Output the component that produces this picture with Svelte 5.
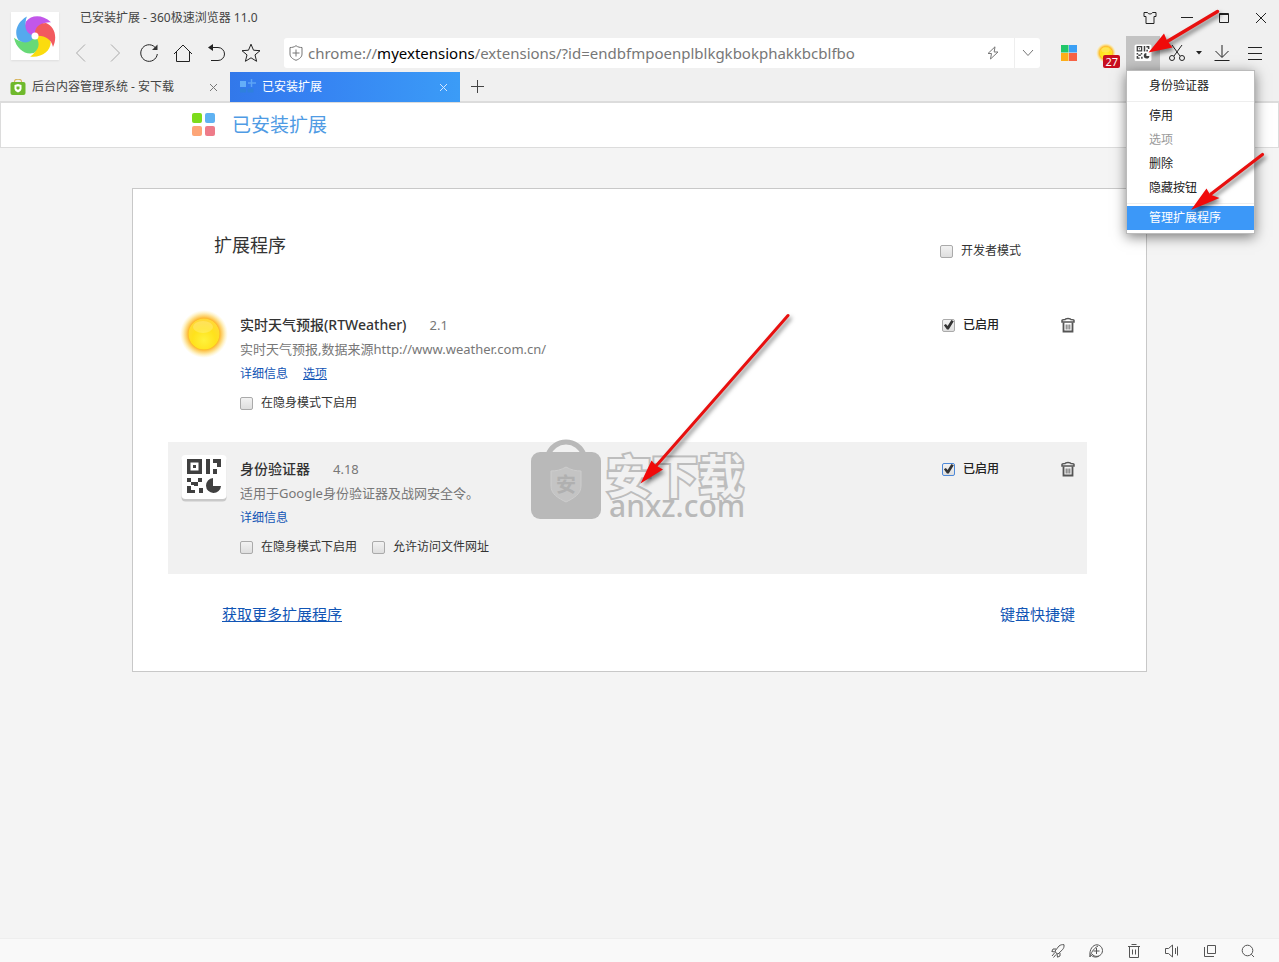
<script>
  let extensions = $state([
    {
      id: "rtweather",
      icon: "sun",
      name: "实时天气预报(RTWeather)",
      version: "2.1",
      desc: "实时天气预报,数据来源http://www.weather.com.cn/",
      options: true,
      enabled: true,
      checks: ["在隐身模式下启用"],
      selected: false,
    },
    {
      id: "auth",
      icon: "qr",
      name: "身份验证器",
      version: "4.18",
      desc: "适用于Google身份验证器及战网安全令。",
      options: false,
      enabled: true,
      checks: ["在隐身模式下启用", "允许访问文件网址"],
      selected: true,
    },
  ]);

  let devMode = $state(false);

  const menuGroups = [
    [{ text: "身份验证器" }],
    [
      { text: "停用" },
      { text: "选项", disabled: true },
      { text: "删除" },
      { text: "隐藏按钮" },
    ],
    [{ text: "管理扩展程序", active: true }],
  ];

  const petals = [
    { angle: 72, color: "#fbdc0e" },
    { angle: 144, color: "#67d977" },
    { angle: 216, color: "#55a9ee" },
    { angle: 288, color: "#c257ea" },
    { angle: 0, color: "#f25a5f" },
  ];
</script>

{#snippet sun(size, id)}
  <svg class="pic" width={size} height={size} viewBox="0 0 48 48">
    <defs>
      <radialGradient id={"glow" + id}>
        <stop offset="0.64" stop-color="#fdb022" />
        <stop offset="0.8" stop-color="#fdd873" stop-opacity="0.8" />
        <stop offset="1" stop-color="#fff0a8" stop-opacity="0" />
      </radialGradient>
      <radialGradient id={"disc" + id} cx="0.5" cy="0.7" r="0.75">
        <stop offset="0" stop-color="#fff23c" />
        <stop offset="0.5" stop-color="#ffe21c" />
        <stop offset="1" stop-color="#ffd640" />
      </radialGradient>
    </defs>
    <circle cx="24" cy="24" r="24" fill={"url(#glow" + id + ")"} />
    <circle cx="24" cy="24" r="15.5" fill={"url(#disc" + id + ")"} />
    <ellipse cx="23" cy="17" rx="10" ry="6" fill="#fff" opacity="0.2" />
  </svg>
{/snippet}

{#snippet qr(size)}
  <svg class="pic" width={size} height={size} viewBox="0 0 48 48">
    <rect x="1.5" y="3" width="45" height="44.5" rx="4" fill="#c9c9c9" />
    <rect x="1.5" y="1" width="45" height="44" rx="4" fill="#fff" />
    <g fill="#404040">
      <path d="M7 5h15v15H7zM10.500 8.500v8h8v-8z" fill-rule="evenodd" />
      <path d="M13 11h3v3h-3zM26 5h4v15h-4zM33 5h8v8h-4V9h-4zM33 15h4v5h-4z" />
      <path d="M7 24h4v4H7zM11 28h4v3h-4zM18 24h4v4h-4zM14 28h4v4h-4zM7 32h4v4h4v3H7zM19 34h4v5h-4z" />
      <path d="M33 24v8h8a7.500 7.500 0 1 1-8-8z" />
    </g>
  </svg>
{/snippet}

{#snippet cross()}
  <svg width="9" height="9" viewBox="0 0 9 9" fill="none" stroke="currentColor">
    <path d="M1 1l7 7M8 1l-7 7" />
  </svg>
{/snippet}

<div class="window">
  <header>
    <button class="avatar" aria-label="Account">
      <svg width="42" height="42" viewBox="-21 -21 42 42">
        {#each petals as p}
          <path
            d="M0 0C-1 -8 4 -13 11 -13C19 -10 23 0 18 11C16 3 10 -1 0 0z"
            fill={p.color}
            transform={`rotate(${p.angle})`}
          />
        {/each}
        <circle r="3.500" fill="#fff" />
      </svg>
    </button>
    <div class="chrome">
      <div class="titlebar">
        <span class="wintitle">已安装扩展 - 360极速浏览器 11.0</span>
        <div class="winbtns">
          <button aria-label="Skin">
            <svg width="14" height="14" viewBox="0 0 14 14">
              <path d="M4.500 1.500H1v4h2v7h8v-7h2v-4H9.500C9 3.500 5 3.500 4.500 1.500z" />
            </svg>
          </button>
          <button aria-label="Minimize">
            <svg width="12" height="12" viewBox="0 0 12 12"><path d="M0 5.500h12" /></svg>
          </button>
          <button aria-label="Maximize">
            <svg width="12" height="12" viewBox="0 0 12 12"><path d="M1.500 1.500h9v9h-9zM1 2.500h10" /></svg>
          </button>
          <button aria-label="Close">
            <svg width="12" height="12" viewBox="0 0 12 12"><path d="M1 1l10 10M11 1L1 11" /></svg>
          </button>
        </div>
      </div>

      <div class="toolbar">
        <div class="nav">
          <button class="dim" aria-label="Back">
            <svg width="20" height="20" viewBox="0 0 20 20"><path d="M14 1.500L5.500 10l8.500 8.500" /></svg>
          </button>
          <button class="dim" aria-label="Forward">
            <svg width="20" height="20" viewBox="0 0 20 20"><path d="M6 1.500L14.500 10 6 18.500" /></svg>
          </button>
          <button aria-label="Reload">
            <svg width="20" height="20" viewBox="0 0 20 20">
              <path d="M17 5.500A8.300 8.300 0 1 0 18.300 11" />
              <path d="M18.500 1.500v5.500H13z" fill="#333" stroke="none" />
            </svg>
          </button>
          <button aria-label="Home">
            <svg width="20" height="20" viewBox="0 0 20 20"><path d="M1 11l9-9 9 9M3.500 9v9.500h13V9" /></svg>
          </button>
          <button aria-label="Undo">
            <svg width="20" height="20" viewBox="0 0 20 20">
              <path d="M4 4.500h7a6.500 6.500 0 0 1 0 13H4" />
              <path d="M1 4.500L6 1v7z" fill="#222" stroke="none" />
            </svg>
          </button>
          <button aria-label="Favorite">
            <svg width="20" height="20" viewBox="0 0 20 20">
              <path d="M10 1.200l2.500 6 6.500.5-5 4.200 1.600 6.400L10 14.800l-5.600 3.500L6 11.900 1 7.700l6.500-.5z" />
            </svg>
          </button>
        </div>

        <div class="address">
          <svg class="shield" width="14" height="16" viewBox="0 0 14 16">
            <path d="M7 .7c2 1.500 4 1.800 6 1.800V9c0 3-2.500 5-6 6.300C3.500 14 1 12 1 9V2.500c2 0 4-.3 6-1.800zM7 4.500v7M3.500 8h7" />
          </svg>
          <div class="url">chrome://<b>myextensions</b>/extensions/?id=endbfmpoenplblkgkbokphakkbcblfbo</div>
          <button class="bolt" aria-label="Turbo">
            <svg width="12" height="14" viewBox="0 0 12 14"><path d="M8 .8L1 7.500h3.500L3.500 13 11 6H7.200z" /></svg>
          </button>
          <button class="drop" aria-label="History">
            <svg width="12" height="8" viewBox="0 0 12 8"><path d="M1 1l5 5.500L11 1" /></svg>
          </button>
        </div>

        <div class="tools">
          <button class="apps" aria-label="Apps">
            <svg class="pic" width="16" height="16" viewBox="0 0 16 16">
              <path d="M0 0h7.500v7.500H0z" fill="#20c76a" />
              <path d="M8 0h8v7.500H8z" fill="#3ba0f5" />
              <path d="M0 8h7.500v8H0z" fill="#fdae18" />
              <path d="M8 8h8v8H8z" fill="#f66245" />
            </svg>
          </button>
          <button class="weather" aria-label="RTWeather">
            {@render sun(20, "s")}
            <span class="badge">27</span>
          </button>
          <div class="ext">
            <button class="extbtn" aria-label="身份验证器">{@render qr(18)}</button>
            <div class="menu" role="menu">
              {#each menuGroups as group}
                <div class="group">
                  {#each group as item}
                    <button role="menuitem" class:active={item.active} disabled={item.disabled}>{item.text}</button>
                  {/each}
                </div>
              {/each}
            </div>
          </div>
          <button class="cut" aria-label="Screenshot">
            <svg width="18" height="18" viewBox="0 0 18 18">
              <path d="M4 1l8 11M14 1L6 12" />
              <circle cx="4" cy="14" r="2.500" /><circle cx="14" cy="14" r="2.500" />
            </svg>
          </button>
          <button class="caret" aria-label="More">
            <svg width="6" height="4" viewBox="0 0 6 4"><path d="M0 0h6L3 3.500z" fill="#222" stroke="none" /></svg>
          </button>
          <button class="down" aria-label="Downloads">
            <svg width="16" height="18" viewBox="0 0 16 18"><path d="M8 1v12M1.500 7L8 13.500 14.500 7M.5 16.500h15" /></svg>
          </button>
          <button class="more" aria-label="Menu">
            <svg width="14" height="14" viewBox="0 0 14 14"><path d="M0 1.500h14M0 7.500h14M0 13.500h14" /></svg>
          </button>
        </div>
      </div>
    </div>
  </header>

  <nav class="tabs">
    <div class="tab">
      <svg width="16" height="16" viewBox="0 0 16 16">
        <path d="M4.500 4V2.500a3 2 0 0 1 7 0V4" fill="none" stroke="#d8b45c" stroke-width="1.200" />
        <rect x="0.500" y="3" width="15" height="13" rx="2" fill="#6fb92c" />
        <path d="M8 5l3.500 1v3.500c0 2-1.500 3-3.500 4-2-1-3.500-2-3.500-4V6z" fill="#fff" />
        <path d="M6.500 7.500h3v2L8 11 6.500 9.500z" fill="#6fb92c" />
      </svg>
      <span>后台内容管理系统 - 安下载</span>
      <button aria-label="Close tab">{@render cross()}</button>
    </div>
    <div class="tab current">
      <svg width="16" height="16" viewBox="0 0 16 16">
        <path d="M0 2h6v6H0z" fill="#64aef8" />
        <path d="M11.500 0v8M8 4h8" stroke="#5da4f5" stroke-width="1.500" />
        <path d="M0 9.500h6v4H0zM7.500 9.500h6v4h-6z" fill="#2f80dd" />
      </svg>
      <span>已安装扩展</span>
      <button aria-label="Close tab">{@render cross()}</button>
    </div>
    <button class="newtab" aria-label="New tab">
      <svg width="13" height="13" viewBox="0 0 13 13" stroke="#444"><path d="M6.500 0v13M0 6.500h13" /></svg>
    </button>
  </nav>

  <div class="pagehead">
    <svg width="24" height="24" viewBox="0 0 24 24">
      <rect width="10" height="10" rx="2" fill="#7ddb1b" />
      <rect x="13" width="10" height="10" rx="2" fill="#5fb2f2" />
      <rect y="13" width="10" height="10" rx="2" fill="#fda577" />
      <rect x="13" y="13" width="10" height="10" rx="2" fill="#ee7b89" />
    </svg>
    <h1>已安装扩展</h1>
  </div>

  <main>
    <section class="card">
      <div class="cardhead">
        <h2>扩展程序</h2>
        <label class="dev"><input type="checkbox" bind:checked={devMode} />开发者模式</label>
      </div>

      {#each extensions as ext (ext.id)}
        <article class:selected={ext.selected}>
          <div class="exticon">
            {#if ext.icon === "sun"}
              {@render sun(48, "b")}
            {:else}
              {@render qr(48)}
            {/if}
          </div>
          <div class="info">
            <div class="name"><h3>{ext.name}</h3><span>{ext.version}</span></div>
            <p>{ext.desc}</p>
            <div class="links">
              <a href="#details">详细信息</a>
              {#if ext.options}<a class="under" href="#options">选项</a>{/if}
            </div>
            <div class="checks">
              {#each ext.checks as text}
                <label><input type="checkbox" />{text}</label>
              {/each}
            </div>
          </div>
          <label class="enabled" class:focus={ext.selected}>
            <input type="checkbox" bind:checked={ext.enabled} />已启用
          </label>
          <button class="trash" aria-label="Remove">
            <svg width="14" height="16" viewBox="0 0 14 16" fill="none" stroke="#555">
              <path d="M1 5V3.500C1 2.500 2 2.500 4 2.500 4.500 1 9.500 1 10 2.500c2 0 3 0 3 1V5z" stroke-width="1.500" />
              <path d="M2.500 5.500v9h9v-9" stroke-width="1.800" />
              <path d="M5.200 7.500v5M7 7.500v5M8.800 7.500v5" stroke-width="0.900" />
            </svg>
          </button>
        </article>
      {/each}

      <div class="cardfoot">
        <a class="under" href="#store">获取更多扩展程序</a>
        <a href="#shortcuts">键盘快捷键</a>
      </div>
    </section>
  </main>

  <footer>
    <button aria-label="Boost">
      <svg width="14" height="14" viewBox="0 0 14 14">
        <path d="M5 9L4 7l4-5c1.500-1.200 3-1.500 5-1.300.2 2-.2 3.500-1.500 5L7 10zM5 5H2L.8 7.500 4 8M9 9v3l-2.500 1.200L6 10M3.500 9L1 12M5 10.500l-2.500 3" />
      </svg>
    </button>
    <button aria-label="Accelerator">
      <svg width="14" height="14" viewBox="0 0 14 14">
        <path d="M1 13C0 5 4 .8 8 .8a5.800 5.800 0 1 1-5 9.200M1 13c1-4 3-8 8-11M7.500 4v6M4.500 7h6M2 11c2 2.500 6 2.500 8 1" />
      </svg>
    </button>
    <button aria-label="Clean">
      <svg width="12" height="14" viewBox="0 0 12 14"><path d="M0 2.500h12M3.500 .5h5M1.500 2.500v11h9v-11M4.500 5.500v5M7.500 5.500v5" /></svg>
    </button>
    <button aria-label="Sound">
      <svg width="14" height="14" viewBox="0 0 14 14"><path d="M.5 4.500h3L7.500 1v12l-4-3.500h-3zM10.500 4v6M12.500 2.500v9" /></svg>
    </button>
    <button aria-label="Windows">
      <svg width="14" height="14" viewBox="0 0 14 14"><path d="M4.500 1.500h8v8h-8zM1.500 3v9.500H11" /></svg>
    </button>
    <button aria-label="Zoom">
      <svg width="14" height="14" viewBox="0 0 14 14"><circle cx="6.500" cy="6.500" r="5.300" /><path d="M10.300 10.300L13 13" /></svg>
    </button>
  </footer>

  <div class="watermark">
    <svg width="72" height="82" viewBox="0 0 72 82">
      <path d="M18 17a19 19 0 0 1 36 0" fill="none" stroke="#b9b9b9" stroke-width="5" />
      <rect x="1" y="14" width="70" height="67" rx="9" fill="#b9b9b9" />
      <path d="M36 29c5 3 10 4 15 4v15c0 8-7 12-15 16-8-4-15-8-15-16V33c5 0 10-1 15-4z" fill="#c4c4c4" stroke="#cdcdcd" />
      <text x="36" y="54" text-anchor="middle">安</text>
    </svg>
    <div class="words">
      <span class="cn">安下载</span>
      <span class="en">anxz.com</span>
    </div>
  </div>

  <svg class="arrows" width="657" height="500" viewBox="0 0 657 500">
    <g fill="#f00a0a" stroke="#e8100f" stroke-linecap="round">
      <path d="M595.500 11.500L546 41" stroke-width="3.500" />
      <path d="M526.500 52.500L542 33.500l3 7 5.500 7z" stroke="none" />
      <path d="M640.500 154.500L589 194" stroke-width="3.200" />
      <path d="M569 210l15.500-21.500 3.500 6 9.500 3.500z" stroke="none" />
      <path d="M166 315.500L34 466" stroke-width="3" />
      <path d="M18.500 483.500l11-23 4.500 5 7 4z" stroke="none" />
    </g>
  </svg>
</div>

<style>
  :global(body) {
    background: #f4f4f4;
  }

  .window {
    position: relative;
    display: flex;
    flex-direction: column;
    min-height: 100vh;
    overflow: hidden;
    font: 12px/18px "Noto Sans", "Noto Sans CJK SC", sans-serif;
    color: #333;
  }

  button {
    display: flex;
    align-items: center;
    justify-content: center;
    padding: 0;
    border: 0;
    background: none;
    font: inherit;
    color: inherit;
  }

  svg {
    display: block;
    flex: none;
  }

  h1,
  h2,
  h3,
  p {
    margin: 0;
    font-weight: normal;
  }

  a {
    color: #1155b5;
    text-decoration: none;
  }

  a.under {
    text-decoration: underline;
  }

  header {
    display: flex;
    height: 72px;
    background: #f0f0f0;
  }

  .avatar {
    width: 48px;
    height: 48px;
    margin: 12px 5px 0 11px;
    background: #fff;
    box-shadow: 0 1px 2px #ddd;
  }

  .chrome {
    flex: 1;
    min-width: 0;
  }

  .titlebar {
    display: flex;
    justify-content: space-between;
    align-items: center;
    height: 36px;
  }

  .wintitle {
    padding-left: 16px;
    color: #444;
  }

  .winbtns {
    display: flex;
  }

  .winbtns button {
    width: 37px;
    height: 36px;
  }

  .winbtns svg,
  .toolbar button > svg:not(.pic),
  .shield,
  footer svg {
    fill: none;
    stroke: #222;
  }

  .toolbar {
    display: flex;
    align-items: center;
    height: 34px;
  }

  .nav {
    display: flex;
  }

  .nav button {
    width: 34px;
    height: 34px;
  }

  .toolbar .nav .dim svg:not(.pic) {
    stroke: #aaa;
  }

  .address {
    flex: 1;
    display: flex;
    align-items: center;
    min-width: 0;
    height: 30px;
    margin-left: 16px;
    border-radius: 3px;
    background: #fff;
  }

  .toolbar .address .shield,
  .toolbar .address button > svg:not(.pic) {
    stroke: #777;
  }

  .shield {
    margin: 0 5px;
  }

  .url {
    flex: 1;
    overflow: hidden;
    white-space: nowrap;
    font-size: 15px;
    line-height: 24px;
    color: #777;
  }

  .url b {
    font-weight: normal;
    color: #000;
  }

  .bolt {
    width: 42px;
    height: 30px;
  }

  .drop {
    width: 26px;
    height: 30px;
    border-left: 1px solid #eee;
  }

  .tools {
    display: flex;
    align-items: center;
    padding-left: 12px;
  }

  .tools > button {
    height: 34px;
  }

  .apps {
    width: 34px;
  }

  .weather {
    position: relative;
    width: 40px;
  }

  .badge {
    position: absolute;
    right: 6px;
    bottom: 2px;
    padding: 0 2px;
    border-radius: 2px;
    background: #c80f1f;
    color: #fff;
    font-size: 11px;
    line-height: 13px;
  }

  .ext {
    position: relative;
  }

  .extbtn {
    width: 34px;
    height: 34px;
    background: #c3c3c3;
  }

  .menu {
    position: absolute;
    top: 34px;
    left: 0;
    z-index: 2;
    width: 127px;
    border: 1px solid #bbb;
    padding: 1px 0 3px;
    background: #fff;
    box-shadow: 0 3px 12px rgba(0, 0, 0, 0.5);
  }

  .group {
    padding: 2px 0 3px;
  }

  .group:last-child {
    padding-bottom: 0;
  }

  .group + .group {
    border-top: 1px solid #eee;
  }

  .menu button {
    justify-content: flex-start;
    width: 100%;
    height: 24px;
    padding-left: 22px;
    color: #222;
  }

  .menu button:disabled {
    color: #999;
  }

  .menu button.active {
    background: #3c98f8;
    color: #fff;
  }

  .cut {
    width: 34px;
  }

  .caret {
    width: 10px;
  }

  .down {
    width: 36px;
  }

  .more {
    width: 30px;
    margin-right: 9px;
  }

  .tabs {
    display: flex;
    height: 29px;
    border-bottom: 1px solid #dcdcdc;
    background: #f0f0f0;
  }

  .tab {
    display: flex;
    align-items: center;
    width: 230px;
    height: 30px;
    padding: 0 8px 0 10px;
    box-sizing: border-box;
    color: #444;
  }

  .tab span {
    flex: 1;
    padding-left: 6px;
  }

  .tab button {
    width: 18px;
    height: 18px;
    color: #777;
  }

  .tab.current {
    background: linear-gradient(90deg, #3278ea, #3580f2 30%, #3b9cf7);
    color: #fff;
  }

  .tab.current button {
    color: #d5e8ff;
  }

  .newtab {
    width: 34px;
  }

  .pagehead {
    display: flex;
    align-items: center;
    gap: 16px;
    height: 44px;
    padding-left: 191px;
    border: 1px solid #dcdcdc;
    background: #fff;
  }

  h1 {
    font-size: 19px;
    line-height: 28px;
    color: #4f9be4;
  }

  main {
    flex: 1;
    padding: 40px 132px;
  }

  .card {
    border: 1px solid #c8c8c8;
    padding: 40px 59px 45px 35px;
    background: #fff;
  }

  .cardhead {
    display: flex;
    justify-content: space-between;
    height: 69px;
    padding: 0 66px 0 46px;
  }

  h2 {
    font-size: 18px;
    line-height: 32px;
  }

  label {
    display: flex;
    align-items: center;
    gap: 8px;
  }

  .dev {
    height: 44px;
  }

  input {
    appearance: none;
    width: 13px;
    height: 13px;
    margin: 0;
    border: 1px solid #aaa;
    border-radius: 2px;
    background: linear-gradient(#f2f2f2, #dedede);
  }

  input:checked::after {
    content: "";
    display: block;
    height: 11px;
    background: #333;
    clip-path: polygon(8% 52%, 26% 40%, 42% 58%, 76% 4%, 98% 16%, 52% 92%, 36% 92%);
  }

  .focus input {
    border-color: #4d88d8;
  }

  article {
    display: flex;
    align-items: flex-start;
    height: 117px;
    padding: 15px 12px 0 12px;
  }

  article + article {
    margin-top: 12px;
  }

  article.selected {
    background: #f1f1f1;
  }

  .exticon {
    padding: 12px 12px 0 0;
    margin-top: -15px;
  }

  .info {
    flex: 1;
  }

  .name {
    display: flex;
    align-items: center;
    gap: 23px;
    height: 24px;
    color: #777;
    font-size: 13px;
  }

  h3 {
    font-size: 14px;
    font-weight: 500;
    color: #333;
  }

  p {
    font-size: 13px;
    line-height: 24px;
    color: #777;
  }

  .links {
    display: flex;
    gap: 15px;
    padding-top: 1px;
    line-height: 24px;
  }

  .checks {
    display: flex;
    gap: 15px;
    padding-top: 8px;
  }

  .enabled {
    height: 24px;
    width: 119px;
    font-weight: 500;
    color: #222;
  }

  .trash {
    width: 14px;
    height: 24px;
  }

  .cardfoot {
    display: flex;
    justify-content: space-between;
    padding: 28px 12px 0 54px;
    font-size: 15px;
    line-height: 24px;
  }

  footer {
    display: flex;
    justify-content: flex-end;
    align-items: center;
    gap: 14px;
    height: 23px;
    padding-right: 19px;
    border-top: 1px solid #eee;
    background: #f9f9f9;
  }

  footer button {
    width: 24px;
    height: 23px;
  }

  footer svg {
    stroke: #555;
  }

  .watermark {
    position: absolute;
    top: 438px;
    left: 530px;
    display: flex;
    gap: 4px;
    pointer-events: none;
  }

  .watermark text {
    font: bold 20px "Noto Sans CJK SC", sans-serif;
    fill: #b0b0b0;
  }

  .words {
    display: flex;
    flex-direction: column;
    padding-top: 12px;
    color: #b9b9b9;
  }

  .cn {
    font: bold 46px/46px "Noto Sans CJK SC", sans-serif;
    color: #f1f1f1;
    -webkit-text-stroke: 4px #bdbdbd;
    paint-order: stroke fill;
  }

  .en {
    padding-left: 3px;
    font-size: 30px;
    line-height: 20px;
    font-weight: 500;
  }

  .arrows {
    position: absolute;
    top: 0;
    left: 622px;
    z-index: 3;
    pointer-events: none;
    filter: drop-shadow(2px 3px 2px rgba(0, 0, 0, 0.5));
  }
</style>
